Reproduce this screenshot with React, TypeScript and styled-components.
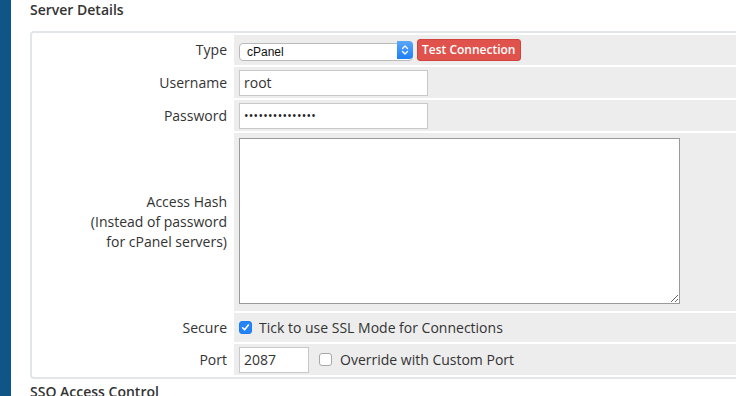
import React from 'react';
import styled, { createGlobalStyle } from 'styled-components';

const GlobalStyle = createGlobalStyle`
  html, body {
    margin: 0;
    padding: 0;
    background: #fff;
    overflow: hidden;
  }
  body {
    font-family: "Open Sans", "Liberation Sans", sans-serif;
    font-size: 14px;
    color: #333;
  }
`;

const Page = styled.div`
  display: flex;
  width: 736px;
  height: 396px;
  overflow: hidden;
`;

const Sidebar = styled.div`
  flex: 0 0 11px;
  background: #0f5686;
`;

const Content = styled.div`
  flex: 1;
  padding-left: 19px;
  min-width: 0;
`;

const SectionTitle = styled.h2`
  margin: 0 0 11px;
  font-size: 14px;
  font-weight: 600;
  line-height: 20px;
  color: #333;
  white-space: nowrap;
`;

const Panel = styled.div`
  width: 900px;
  border: 2px solid #e3e6e8;
  border-radius: 4px;
  margin-bottom: 3px;
`;

const FormTable = styled.table`
  width: 100%;
  border-collapse: separate;
  border-spacing: 2px;
`;

const Row = styled.tr<{ h: number }>`
  height: ${({ h }) => h}px;
`;

const Label = styled.td`
  width: 188px;
  padding: 0 5px 0 5px;
  text-align: right;
  vertical-align: middle;
  line-height: 20px;
  color: #333;
  white-space: nowrap;
`;

const Field = styled.td`
  background: #ededed;
  padding: 0 5px;
  vertical-align: middle;
`;

const Inline = styled.div`
  display: flex;
  align-items: center;
`;

const SelectWrap = styled.div`
  position: relative;
  width: 174px;
  height: 18px;
`;

const Select = styled.select`
  appearance: none;
  -webkit-appearance: none;
  width: 100%;
  height: 18px;
  margin: 0;
  padding: 0 20px 0 7px;
  border: 1px solid #b9b9b9;
  border-radius: 4px;
  background: #fff;
  font-family: "Liberation Sans", Arial, sans-serif;
  font-size: 12px;
  line-height: 16px;
  color: #111;
  outline: none;
`;

const Stepper = styled.span`
  position: absolute;
  right: 0;
  top: 0;
  width: 16px;
  height: 18px;
  border-radius: 0 4px 4px 0;
  background: linear-gradient(#5aa7fb, #1f7ff4);
  display: flex;
  align-items: center;
  justify-content: center;
  pointer-events: none;
`;

const DangerButton = styled.button`
  margin-left: 4px;
  height: 22px;
  padding: 0 4px;
  border: 1px solid #d2433e;
  border-radius: 3px;
  background: #e0534d;
  color: #fff;
  font-family: "Open Sans", sans-serif;
  font-size: 12px;
  font-weight: 600;
  line-height: 20px;
  white-space: nowrap;
  cursor: pointer;
`;

const TextInput = styled.input<{ w: number }>`
  box-sizing: border-box;
  display: block;
  width: ${({ w }) => w}px;
  height: 26px;
  margin: 0;
  padding: 0 4px;
  border: 1px solid #c9c9c9;
  background: #fff;
  font-family: "Open Sans", sans-serif;
  font-size: 14px;
  color: #333;
  outline: none;
`;

const PasswordInput = styled(TextInput)`
  font-size: 12px;
  letter-spacing: 0.3px;
  color: #222;
`;

const TextArea = styled.textarea`
  box-sizing: border-box;
  display: block;
  width: 441px;
  height: 166px;
  margin: -2px 0 0;
  border: 1px solid #9a9a9a;
  background: #fff;
  resize: both;
  outline: none;
`;

const Check = styled.span<{ checked?: boolean }>`
  box-sizing: border-box;
  flex: 0 0 13px;
  width: 13px;
  height: 13px;
  border-radius: 3px;
  border: 1px solid ${({ checked }) => (checked ? '#1d7ef2' : '#a8a8a8')};
  background: ${({ checked }) => (checked ? '#2484f7' : '#fff')};
  display: flex;
  align-items: center;
  justify-content: center;
`;

const CheckText = styled.span<{ gap: number }>`
  margin-left: ${({ gap }) => gap}px;
  line-height: 20px;
  color: #333;
  white-space: nowrap;
`;

const Spacer = styled.span<{ w: number }>`
  flex: 0 0 ${({ w }) => w}px;
`;

const Checkbox: React.FC<{ checked?: boolean }> = ({ checked }) => (
  <Check checked={checked}>
    {checked && (
      <svg width="9" height="9" viewBox="0 0 9 9">
        <path d="M1.6 4.8 L3.6 6.8 L7.4 2" fill="none" stroke="#fff" strokeWidth="1.6" strokeLinecap="round" strokeLinejoin="round" />
      </svg>
    )}
  </Check>
);

export default function App() {
  return (
    <Page>
      <GlobalStyle />
      <Sidebar />
      <Content>
        <SectionTitle>Server Details</SectionTitle>
        <Panel>
          <FormTable>
            <tbody>
              <Row h={30}>
                <Label>Type</Label>
                <Field>
                  <Inline>
                    <SelectWrap>
                      <Select defaultValue="cpanel">
                        <option value="cpanel">cPanel</option>
                      </Select>
                      <Stepper>
                        <svg width="8" height="12" viewBox="0 0 8 12">
                          <path d="M1.5 4.5 L4 2 L6.5 4.5 M1.5 7.5 L4 10 L6.5 7.5" fill="none" stroke="#fff" strokeWidth="1.3" strokeLinecap="round" strokeLinejoin="round" />
                        </svg>
                      </Stepper>
                    </SelectWrap>
                    <DangerButton>Test Connection</DangerButton>
                  </Inline>
                </Field>
              </Row>
              <Row h={31}>
                <Label>Username</Label>
                <Field>
                  <TextInput w={189} defaultValue="root" />
                </Field>
              </Row>
              <Row h={31}>
                <Label>Password</Label>
                <Field>
                  <PasswordInput w={189} type="password" defaultValue="abcdefghijklmno" />
                </Field>
              </Row>
              <Row h={178}>
                <Label>
                  Access Hash
                  <br />
                  (Instead of password
                  <br />
                  for cPanel servers)
                </Label>
                <Field>
                  <TextArea />
                </Field>
              </Row>
              <Row h={29}>
                <Label>Secure</Label>
                <Field>
                  <Inline>
                    <Checkbox checked />
                    <CheckText gap={7}>Tick to use SSL Mode for Connections</CheckText>
                  </Inline>
                </Field>
              </Row>
              <Row h={31}>
                <Label>Port</Label>
                <Field>
                  <Inline>
                    <TextInput w={70} defaultValue="2087" />
                    <Spacer w={10} />
                    <Checkbox />
                    <CheckText gap={8}>Override with Custom Port</CheckText>
                  </Inline>
                </Field>
              </Row>
            </tbody>
          </FormTable>
        </Panel>
        <SectionTitle>SSO Access Control</SectionTitle>
      </Content>
    </Page>
  );
}
